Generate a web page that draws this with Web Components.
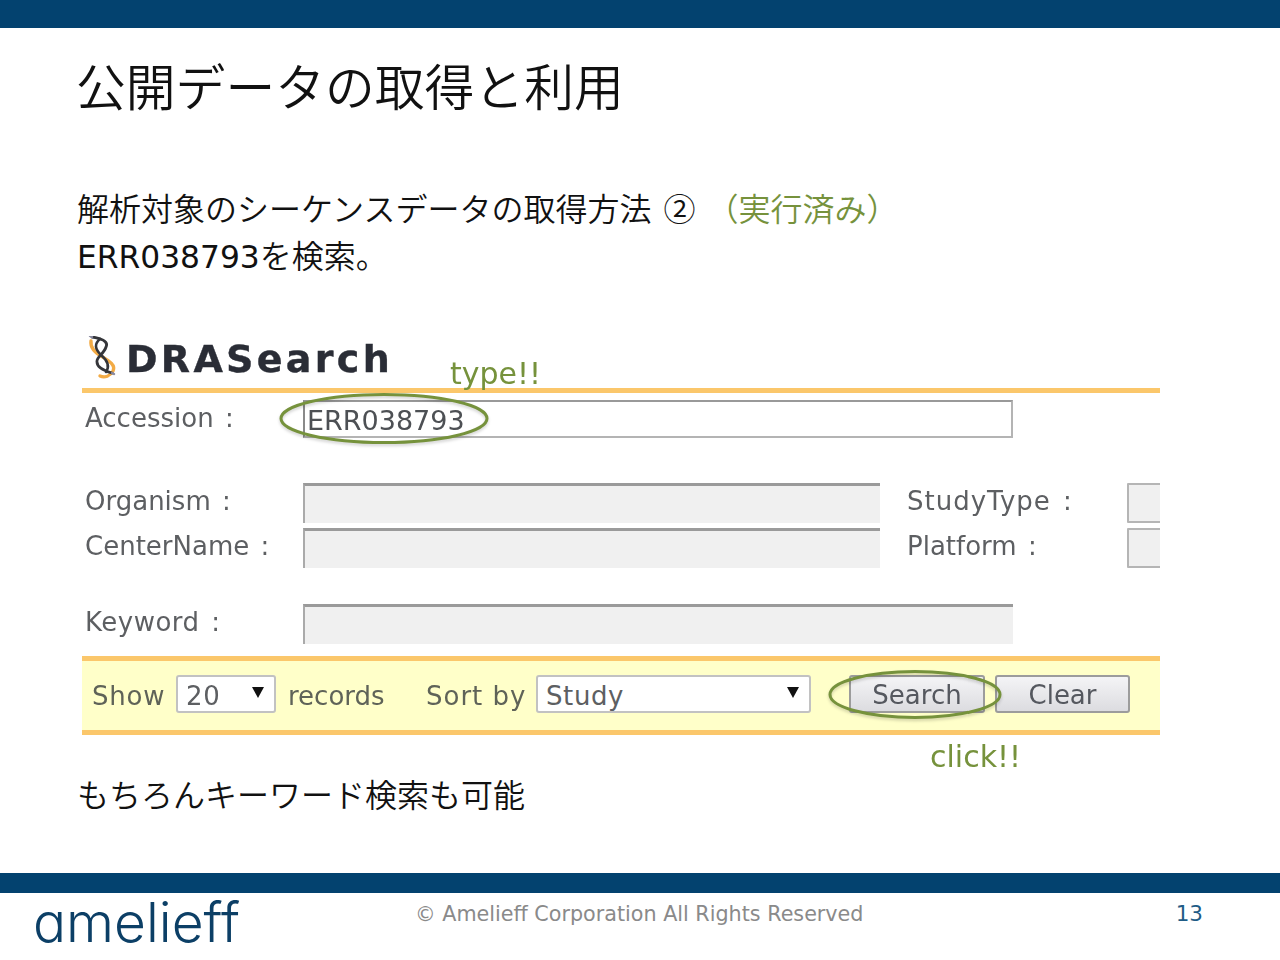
<!DOCTYPE html>
<html lang="ja"><head><meta charset="utf-8"><title>公開データの取得と利用</title>
<style>html,body{margin:0;padding:0;background:#fff}</style></head>
<body>
<slide-page>
  <slide-title>公開データの取得と利用</slide-title>
  <slide-text>
    <div>解析対象のシーケンスデータの取得方法<span style="margin-left:12px">②</span><span style="color:#76923c;margin-left:11px">（実行済み）</span></div>
    <div><span style="font:31.3px 'DejaVu Sans',sans-serif">ERR038793</span>を検索。</div>
  </slide-text>
  <dra-form></dra-form>
  <slide-text style="margin-top:35px">もちろんキーワード検索も可能</slide-text>
  <slide-footer page="13"></slide-footer>
</slide-page>
<script>
const def=(name,css,html)=>customElements.define(name,class extends HTMLElement{
  connectedCallback(){ if(this.shadowRoot)return;
    const s=this.attachShadow({mode:'open'});
    s.innerHTML='<style>'+css+'</style>'+(typeof html==='function'?html(this):html);}
});
const CJK='"Noto Sans CJK JP","Noto Sans",sans-serif';
def('slide-page',`:host{display:flex;flex-direction:column;width:1280px;height:960px;overflow:hidden;background:#fff;color:#111;font-family:${CJK}}
 .top{height:28px;background:#03426f;flex:none}`,`<div class="top"></div><slot></slot>`);
def('slide-title',`:host{display:block;height:112px;line-height:112px;padding-left:76px;font-size:49.8px;font-weight:350;white-space:nowrap;flex:none}
 :host{margin-bottom:44px}`,`<slot></slot>`);
def('slide-text',`:host{display:block;padding-left:77px;font-size:32px;line-height:47px;white-space:nowrap;font-weight:350;flex:none}`,`<slot></slot>`);
def('form-label',`:host{display:block;font:26px/38px "DejaVu Sans",sans-serif;color:#5d5f62;white-space:pre;word-spacing:3px}`,`<slot></slot>`);
def('form-box',`:host{display:block;box-sizing:border-box;height:40px;background:#f0f0f0;border-top:3px solid #9a9a9a;border-left:2px solid #aaa;flex:none}
 :host([plain]){height:38px;background:#fff;border:2px solid #b4b4b4;border-left-color:#8a8a8a;border-top-color:#999;font:27px/38px "DejaVu Sans",sans-serif;color:#4d5054;padding-left:2px}
 :host([short]){border:2px solid #b5b5b5;background:#f0f0f0;border-radius:1px}`,`<slot></slot>`);
def('form-select',`:host{display:flex;align-items:center;box-sizing:border-box;height:38px;background:#fff;border:2px solid #c2c2c2;border-radius:3px;padding:3px 0 0 8px;position:relative;font:26px/34px "DejaVu Sans",sans-serif;color:#5d5f62;flex:none;letter-spacing:.6px}
 svg{position:absolute;right:10px;top:10px}`,`<slot></slot><svg width="12" height="11" viewBox="0 0 12 11"><path d="M0 0h12L6 11z" fill="#111"/></svg>`);
def('form-button',`:host{display:flex;align-items:center;justify-content:center;box-sizing:border-box;height:38px;background:linear-gradient(#f4f4f6,#dcdce0);border:2px solid #9c9c9c;border-radius:3px;padding-top:2px;font:26px/34px "DejaVu Sans",sans-serif;color:#55585f;flex:none}`,`<slot></slot>`);
def('dra-logo',`:host{display:flex;align-items:center;height:53px;box-sizing:border-box;padding:0 0 6px 5px}
 span{font:bold 38px/1 "DejaVu Sans",sans-serif;letter-spacing:3.3px;-webkit-text-stroke:.4px #2a2d36;color:#2a2d36;margin-left:9px;white-space:nowrap}`,
 `<svg width="30" height="46" viewBox="0 0 30 46" fill="none" stroke-linecap="round">
   <path d="M4 5C3 12 8 16 14 20C22 25 29 29 26 35C23 40 18 42 13 40" stroke="#f3ab45" stroke-width="3.4"/>
   <path d="M13 3C7 8 8 13 14 19C20 24 23 30 19 36" stroke="#35363a" stroke-width="2.6"/>
   <path d="M5 1C13 2 22 5 19 11C17 18 9 21 10 26C10 32 18 35 25 37" stroke="#35363a" stroke-width="2.8"/>
   <path d="M3 0l2 1M25 37l2 1" stroke="#8a8aa0" stroke-width="2.4"/>
 </svg><span>DRASearch</span>`);
def('dra-form',`:host{display:block;position:relative;margin:57px 0 0 82px;width:1078px;flex:none;filter:blur(.4px)}
 .rule{height:5px;background:#fbc76b}
 .row{display:flex;padding-left:3px}
 .lab{width:218px;flex:none;margin-top:-1px}
 .r1{margin-top:7px;height:38px}
 .r2{margin-top:45px;overflow:hidden}
 .r3{margin-top:5px;overflow:hidden}
 .r4{margin-top:36px}
 .lab2{width:220px;margin-left:27px;flex:none;margin-top:-1px}
 .bar{margin-top:12px;height:79px;box-sizing:border-box;border-top:5px solid #fbc76b;border-bottom:5px solid #fbc76b;background:#ffffc9;display:flex;align-items:flex-start;padding:14px 0 0 10px}
 .bar form-label{color:#5f6358;margin-top:2px}
 svg.ov{position:absolute;left:0;top:0;overflow:visible;pointer-events:none;filter:drop-shadow(0 2px 1.5px rgba(0,0,0,.18))}
 .note{position:absolute;font:30px/40px "DejaVu Sans",sans-serif;color:#76923c;white-space:nowrap}`,
 `<dra-logo></dra-logo><div class="rule"></div>
 <div class="row r1"><form-label class="lab">Accession :</form-label><form-box plain style="width:710px">ERR038793</form-box></div>
 <div class="row r2"><form-label class="lab">Organism :</form-label><form-box style="width:577px"></form-box><form-label class="lab2" style="letter-spacing:1px">StudyType :</form-label><form-box short style="width:40px"></form-box></div>
 <div class="row r3"><form-label class="lab">CenterName :</form-label><form-box style="width:577px"></form-box><form-label class="lab2">Platform :</form-label><form-box short style="width:40px"></form-box></div>
 <div class="row r4"><form-label class="lab" style="letter-spacing:.5px">Keyword :</form-label><form-box style="width:710px"></form-box></div>
 <div class="bar"><form-label style="width:73px;letter-spacing:.8px">Show</form-label><form-select style="width:100px;margin-left:11px">20</form-select><form-label style="margin-left:12px;width:98px">records</form-label><form-label style="margin-left:40px;width:99px;letter-spacing:1px;word-spacing:0">Sort by</form-label><form-select style="width:275px;margin-left:11px">Study</form-select><form-button style="margin-left:38px;width:136px">Search</form-button><form-button style="margin-left:10px;width:135px">Clear</form-button></div>
 <svg class="ov" width="1078" height="400">
  <ellipse cx="302" cy="83.5" rx="103" ry="24" fill="none" stroke="#76923c" stroke-width="3"/>
  <ellipse cx="833" cy="359.5" rx="85" ry="23" fill="none" stroke="#76923c" stroke-width="3"/>
 </svg>
 <span class="note" style="left:368px;top:19px">type!!</span>
 <span class="note" style="left:848px;top:402px">click!!</span>`);
def('slide-footer',`:host{display:block;margin-top:auto;height:87px;flex:none}
 .bar{height:20px;background:#03426f}
 .row{display:flex;height:67px}
 .logo{font:300 55px/1 Inter,sans-serif;font-feature-settings:"cv11";color:#0c3f66;margin:2px 0 0 33px;width:382px;flex:none}
 .c{font:20.7px/42px "DejaVu Sans",sans-serif;color:#8a8a8a;white-space:nowrap}
 .n{margin-left:auto;margin-right:77px;font:21.5px/42px "DejaVu Sans",sans-serif;color:#1f5c86}`,
 h=>`<div class="bar"></div><div class="row"><div class="logo">amelieff</div><div class="c">© Amelieff Corporation All Rights Reserved</div><div class="n">${h.getAttribute('page')}</div></div>`);
</script>
</body></html>
